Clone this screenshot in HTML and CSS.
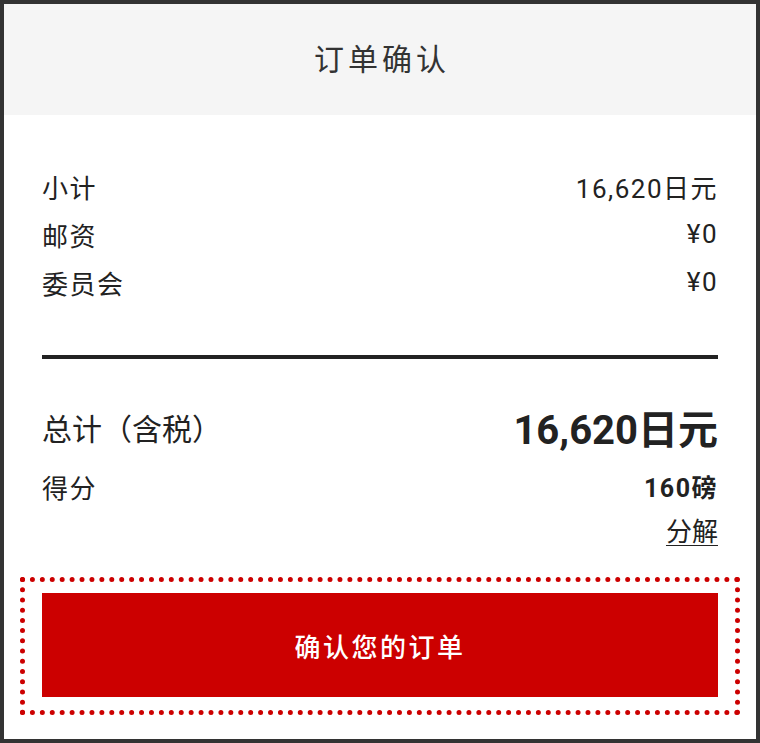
FILE: index.html
```html
<!DOCTYPE html>
<html lang="zh-CN">
<head>
    <meta charset="UTF-8">
    <meta name="viewport" content="width=device-width, initial-scale=1.0">
    <title>订单确认</title>
    <link rel="stylesheet" href="styles.css">
</head>
<body>
    <div class="frame">
        <div class="header">订单确认</div>
        <div class="summary">
            <div class="row">
                <span>小计</span>
                <span>16,620日元</span>
            </div>
            <div class="row">
                <span>邮资</span>
                <span>¥0</span>
            </div>
            <div class="row">
                <span>委员会</span>
                <span>¥0</span>
            </div>
        </div>
        <div class="divider"></div>
        <div class="totals">
            <div class="row row-total">
                <span class="total-label">总计（含税）</span>
                <span class="total-value">16,620日元</span>
            </div>
            <div class="row row-points">
                <span>得分</span>
                <span class="points-value">160磅</span>
            </div>
            <div class="breakdown">
                <a href="#" class="breakdown-link">分解</a>
            </div>
        </div>
        <div class="confirm-wrap">
            <button class="confirm-button">确认您的订单</button>
        </div>
    </div>
</body>
</html>
```

FILE: styles.css
```css
html, body {
    margin: 0;
    padding: 0;
    background-color: #fff;
}

body {
    font-family: 'Roboto', 'Noto Sans CJK SC', sans-serif;
    color: #222;
}

.frame {
    box-sizing: border-box;
    width: 760px;
    height: 743px;
    border: 4px solid #333;
    background-color: #fff;
}

.header {
    box-sizing: border-box;
    height: 111px;
    padding: 0 0 5px 4px;
    background-color: #f5f5f5;
    display: flex;
    justify-content: center;
    align-items: center;
    font-size: 30px;
    letter-spacing: 4px;
    color: #333;
}

.summary {
    padding: 47px 38px 0;
}

.row {
    display: flex;
    justify-content: space-between;
    align-items: center;
    height: 48px;
    font-size: 26px;
    letter-spacing: 1.5px;
}

.divider {
    margin: 49px 38px 0;
    border-top: 4px solid #222;
}

.totals {
    padding: 40px 38px 0;
}

.row-total {
    height: 56px;
}

.total-label {
    font-size: 30px;
    letter-spacing: 0;
}

.total-value {
    font-size: 40px;
    font-weight: 700;
    letter-spacing: 0;
}

.row-points {
    margin-top: 7px;
}

.points-value {
    font-size: 25px;
    font-weight: 700;
}

.breakdown {
    display: flex;
    justify-content: flex-end;
    align-items: center;
    height: 42px;
    margin-top: -2px;
}

.breakdown-link {
    font-size: 26px;
    color: #222;
    text-decoration: underline;
    text-underline-offset: 4px;
    text-decoration-thickness: 1px;
}

.confirm-wrap {
    margin: 27px 16px 0;
    border: 5px dotted #cc0000;
    padding: 11px 17px 13px;
}

.confirm-button {
    display: block;
    width: 100%;
    height: 104px;
    border: none;
    background-color: #cc0000;
    color: #fff;
    font-family: 'Roboto', 'Noto Sans CJK SC', sans-serif;
    font-size: 26px;
    font-weight: 500;
    letter-spacing: 2.5px;
    cursor: pointer;
}
```
